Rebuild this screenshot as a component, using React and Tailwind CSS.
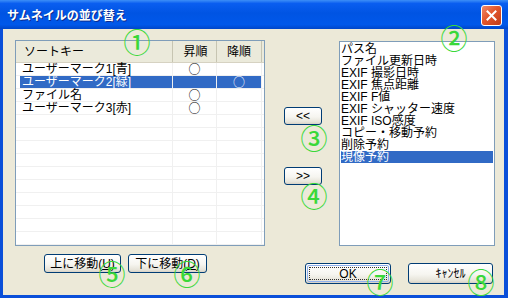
import { useState } from 'react';

const leftRows = [
  { name: 'ユーザーマーク1[青]', asc: true, desc: false },
  { name: 'ユーザーマーク2[緑]', asc: false, desc: true, selected: true },
  { name: 'ファイル名', asc: true, desc: false },
  { name: 'ユーザーマーク3[赤]', asc: true, desc: false },
];

const rightItems = [
  'パス名',
  'ファイル更新日時',
  'EXIF 撮影日時',
  'EXIF 焦点距離',
  'EXIF F値',
  'EXIF シャッター速度',
  'EXIF ISO感度',
  'コピー・移動予約',
  '削除予約',
  '現像予約',
];

const marks = [
  { ch: '①', cls: 'left-[137px] top-[41px]' },
  { ch: '②', cls: 'left-[454px] top-[37px]' },
  { ch: '③', cls: 'left-[314px] top-[137px]' },
  { ch: '④', cls: 'left-[314px] top-[195px]' },
  { ch: '⑤', cls: 'left-[112px] top-[273px]' },
  { ch: '⑥', cls: 'left-[187px] top-[273px]' },
  { ch: '⑦', cls: 'left-[380px] top-[281px]' },
  { ch: '⑧', cls: 'left-[481px] top-[281px]' },
];

const btn =
  'relative flex items-center justify-center rounded-[3px] border border-[#003c74] bg-[linear-gradient(180deg,#ffffff_0%,#f6f5f0_55%,#e6e3d8_88%,#d6d0c5_100%)] text-[12px] leading-none text-black';

function XpButton({ className, children, focused }) {
  return (
    <div className={`${btn} ${className}`}>
      {focused && (
        <span className="absolute inset-[1px] rounded-[2px] border border-[#8fb0ee]">
          <span className="absolute inset-[1px] border border-dotted border-[#333]" />
        </span>
      )}
      <span className="relative">{children}</span>
    </div>
  );
}

const circle = "font-['Noto_Sans_CJK_JP',sans-serif]";

export default function App() {
  const [selected] = useState(9);

  return (
    <div className="relative flex h-[298px] w-[508px] flex-col bg-[#0a4fd9] font-['Liberation_Sans','Noto_Sans_CJK_JP',sans-serif] text-[12px] text-black">
      {/* Title bar */}
      <div className="flex h-[29px] items-start bg-[linear-gradient(180deg,#3d8ff7_0%,#0a5ef0_12%,#0054e3_45%,#0058ea_85%,#0046c8_100%)]">
        <span className="mt-[8px] pl-[7px] text-[12px] font-bold leading-[16px] text-white [text-shadow:1px_1px_0_#0c2a8c]">
          サムネイルの並び替え
        </span>
        <div className="ml-auto mr-[6px] mt-[5px] flex h-[21px] w-[21px] items-center justify-center rounded-[3px] border border-white bg-[linear-gradient(135deg,#f08a6a_0%,#e2562c_45%,#c23c18_100%)]">
          <svg width="11" height="11" viewBox="0 0 11 11">
            <path d="M1.5 1.5 L9.5 9.5 M9.5 1.5 L1.5 9.5" stroke="white" strokeWidth="2" strokeLinecap="square" />
          </svg>
        </div>
      </div>

      {/* Body */}
      <div className="mb-[3px] ml-[3px] mr-[4px] flex flex-1 flex-col bg-[#ece9d8]">
        <div className="flex pt-[11px]">
          {/* Sort key list */}
          <div className="ml-[12px] h-[206px] w-[250px] overflow-hidden border border-[#7f9db9] bg-white">
            <div className="flex h-[22px] border-b border-[#d6d2c2] bg-[#ebeadb]">
              <div className="flex w-[157px] items-center border-r border-[#c7c5b2] pl-[8px]">ソートキー</div>
              <div className="flex w-[44px] items-center justify-center border-r border-[#c7c5b2] pl-[2px]">昇順</div>
              <div className="flex w-[45px] items-center justify-center border-r border-[#c7c5b2]">降順</div>
              <div className="flex-1" />
            </div>
            {leftRows.map((r) => (
              <div key={r.name} className="flex h-[13px] border-b border-[#f0f0f0] leading-[12px]">
                <div className="w-[4px]" />
                <div className={`w-[153px] border-r border-[#f0f0f0] pl-[2px] ${r.selected ? 'bg-[#316ac5] text-white' : ''}`}>
                  {r.name}
                </div>
                <div className={`w-[44px] border-r border-[#f0f0f0] text-center ${circle} ${r.selected ? 'bg-[#316ac5] text-white' : ''}`}>
                  {r.asc ? '○' : ''}
                </div>
                <div className={`w-[45px] border-r border-[#f0f0f0] text-center ${circle} ${r.selected ? 'bg-[#316ac5] text-white' : ''}`}>
                  {r.desc ? '○' : ''}
                </div>
              </div>
            ))}
            {Array.from({ length: 11 }).map((_, i) => (
              <div key={i} className="flex h-[13px] border-b border-[#f0f0f0]">
                <div className="w-[157px] border-r border-[#f0f0f0]" />
                <div className="w-[44px] border-r border-[#f0f0f0]" />
                <div className="w-[45px] border-r border-[#f0f0f0]" />
              </div>
            ))}
          </div>

          {/* Move buttons */}
          <div className="flex w-[74px] flex-col pl-[19px]">
            <XpButton className="mt-[67px] h-[18px] w-[38px]">&lt;&lt;</XpButton>
            <XpButton className="mt-[42px] h-[18px] w-[38px]">&gt;&gt;</XpButton>
          </div>

          {/* Available keys */}
          <div className="mt-[1px] h-[205px] w-[156px] border border-[#7f9db9] bg-white p-[1px]">
            {rightItems.map((item, i) => (
              <div
                key={item}
                className={`h-[12px] whitespace-nowrap leading-[12px] ${i === selected ? 'bg-[#316ac5] text-white' : ''}`}
              >
                {item}
              </div>
            ))}
          </div>
        </div>

        <div className="flex">
          <div className="ml-[41px] mt-[8px] flex gap-[7px]">
            <XpButton className="h-[19px] w-[77px]">
              上に移動(<span className="underline">U</span>)
            </XpButton>
            <XpButton className="h-[19px] w-[79px]">
              下に移動(<span className="underline">D</span>)
            </XpButton>
          </div>
          <div className="ml-auto mr-[11px] mt-[17px] flex gap-[17px]">
            <XpButton className="h-[21px] w-[86px]" focused>
              OK
            </XpButton>
            <XpButton className="h-[21px] w-[85px]">ｷｬﾝｾﾙ</XpButton>
          </div>
        </div>
      </div>

      {/* Annotation marks */}
      {marks.map((m) => (
        <span
          key={m.ch}
          className={`absolute ${m.cls} -translate-x-1/2 -translate-y-1/2 font-['Noto_Sans_CJK_JP',sans-serif] text-[27px] font-medium leading-none text-[#3ad83a]`}
        >
          {m.ch}
        </span>
      ))}
    </div>
  );
}
